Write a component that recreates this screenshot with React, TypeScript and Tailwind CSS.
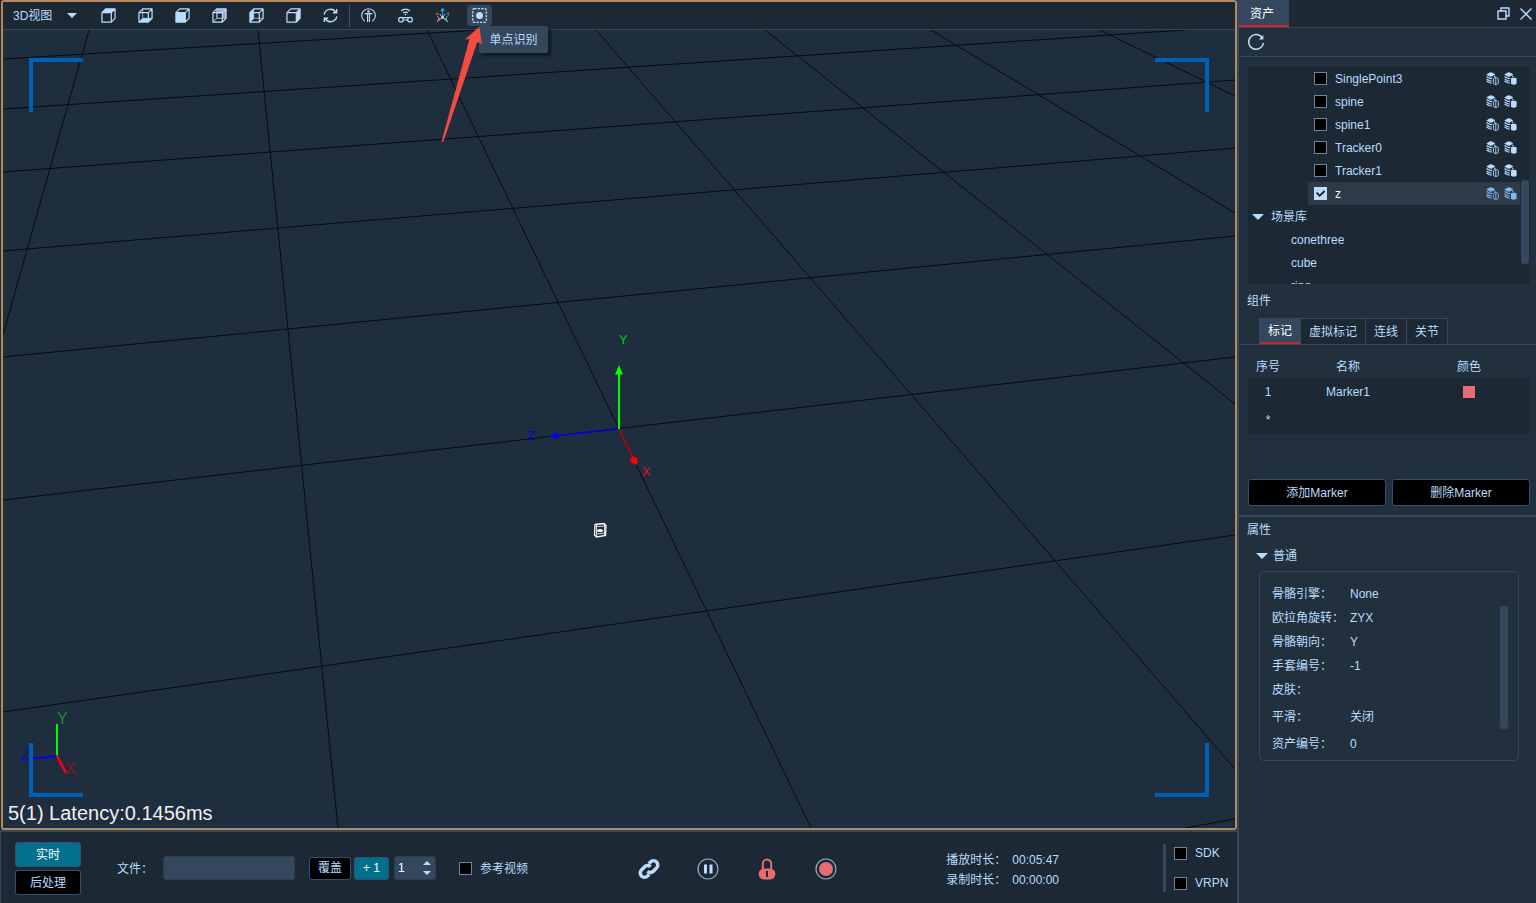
import React, { useState } from "react";

const axes = [
  [3, 59, 480, 30],
  [3, 109, 1185, 30],
  [3, 172, 1235, 80],
  [3, 251, 1235, 148],
  [3, 357, 1235, 236],
  [3, 500, 1235, 357],
  [3, 712, 1235, 535],
  [1185, 828, 1235, 819],
  [89, 30, 3, 335],
  [258, 30, 338, 828],
  [427, 30, 811, 828],
  [596, 30, 1235, 769],
  [765, 30, 1235, 404],
  [931, 30, 1235, 213],
  [1100, 30, 1235, 96],
];

const views = ["top", "bottom", "front", "back", "left", "right"];

const facePaths: Record<string, string> = {
  top: "M1 5 5 1h10l-4 4z",
  bottom: "M1 15l4-4h10l-4 4z",
  front: "M1 5h10v10H1z",
  back: "M5 1h10v10H5z",
  left: "M1 5l4-4v10l-4 4z",
  right: "M11 5l4-4v10l-4 4z",
};

const assets = ["SinglePoint3", "spine", "spine1", "Tracker0", "Tracker1", "z"];
const scenes = ["conethree", "cube", "ring"];
const tabs = ["标记", "虚拟标记", "连线", "关节"];

const props = [
  { label: "骨骼引擎：", value: "None", h: "h-6" },
  { label: "欧拉角旋转：", value: "ZYX", h: "h-6" },
  { label: "骨骼朝向：", value: "Y", h: "h-6" },
  { label: "手套编号：", value: "-1", h: "h-6" },
  { label: "皮肤：", value: "", h: "h-6" },
  { label: "平滑：", value: "关闭", h: "h-[30px]" },
  { label: "资产编号：", value: "0", h: "h-6" },
];

function CubeIcon({ face }: { face: string }) {
  const hidden = face === "bottom" || face === "back" || face === "left";
  return (
    <svg width="15" height="15" viewBox="0 0 16 16" fill="none" stroke="#b9dcff" strokeWidth="1.3" strokeLinejoin="round">
      {hidden && <path d="M5 1v10h10M5 11l-4 4" strokeWidth="1.1" opacity="0.7" />}
      <path d={facePaths[face]} fill="#b9dcff" stroke="none" opacity={face === "back" ? 0.75 : 1} />
      <path d="M1 5 5 1h10v10l-4 4H1zM1 5h10v10M11 5l4-4" />
      {face === "back" && <path d="M6 6h4.400v4.400H6z" fill="#1c2834" stroke="none" />}
    </svg>
  );
}

function Caret({ className = "" }: { className?: string }) {
  return (
    <svg width="12" height="6" viewBox="0 0 12 6" className={className}>
      <path d="M0 0h12L6 6z" fill="#b9dcff" />
    </svg>
  );
}

function SyncIcon() {
  return (
    <svg width="15" height="15" viewBox="0 0 16 16" fill="none" stroke="#b9dcff" strokeWidth="1.500">
      <path d="M1.200 7A6.900 6.900 0 0 1 13.800 4.600M14.800 9A6.900 6.900 0 0 1 2.200 11.400" />
      <path d="M14.600 1v4h-4M1.400 15v-4h4" />
    </svg>
  );
}

function BodyIcon() {
  return (
    <svg width="15" height="15" viewBox="0 0 16 16" fill="none" stroke="#b9dcff" strokeWidth="1.2">
      <path d="M4 14.200A7.300 7.300 0 1 1 12 14.200" />
      <circle cx="8" cy="3.600" r="1.300" fill="#b9dcff" stroke="none" />
      <path d="M4 6h8" strokeWidth="1.400" />
      <path d="M7 6v9M9 6v9" />
    </svg>
  );
}

function TrackerIcon() {
  return (
    <svg width="15" height="15" viewBox="0 0 16 16" fill="none" stroke="#b9dcff" strokeWidth="1.3">
      <path d="M3.400 3.200a6.400 6.400 0 0 1 9.200 0M5.400 5.400a3.600 3.600 0 0 1 5.200 0" />
      <circle cx="8" cy="7" r="0.9" fill="#b9dcff" stroke="none" />
      <circle cx="3.200" cy="12.400" r="2.500" />
      <circle cx="12.800" cy="12.400" r="2.500" />
      <path d="M4.400 10.200h7.200M5.600 12.800h4.800" />
    </svg>
  );
}

function AxesIcon() {
  return (
    <svg width="15" height="15" viewBox="0 0 16 16" fill="none">
      <path d="M8 10V2M6 3.400 8 1.200l2 2.200M6.400 1h3.400" stroke="#3f8fe0" strokeWidth="1.2" />
      <path d="M8 10l-6 4.600" stroke="#e66c70" strokeWidth="1.3" />
      <path d="M8 10l6 4.600" stroke="#5fc9a8" strokeWidth="1.3" />
      <path d="M1 5l2.400 2.600M3.400 5 1 7.600" stroke="#d2565c" />
      <path d="M12.600 4.600l1.400 1.600 1.400-1.600M14 6.200v2" stroke="#4fb896" />
      <path d="M2.600 9c1.800 1 1.800 2.400 1.400 4M13.400 9c-1.800 1-1.800 2.400-1.400 4M5 6.400 8 10l3-3.600" stroke="#b9dcff" />
      <circle cx="8" cy="10" r="1.400" fill="#b9dcff" />
    </svg>
  );
}

function PointIcon() {
  return (
    <svg width="15" height="15" viewBox="0 0 15 15" fill="none">
      <rect x="0.700" y="0.700" width="13.600" height="13.600" rx="1.500" stroke="#b9dcff" strokeWidth="1.3" strokeDasharray="2.300 1.200" />
      <circle cx="7.500" cy="7.500" r="3.500" fill="#b9dcff" />
    </svg>
  );
}

function StackIcon({ filled, color }: { filled: boolean; color: string }) {
  return (
    <svg width="13" height="13" viewBox="0 0 13 13" fill="none" stroke={color}>
      <path d="M.6 2.500C2 2.200 3.200.6 4.800.6S7.600 1.900 9 2.500C7.600 3.200 6.400 4.400 4.800 4.400S2 3.200.6 2.500z" fill={color} strokeWidth="0.5" />
      <path d="M.5 4.600c1.500.4 2.600 2 4.300 2l1.400-.4M.5 7c1.500.4 2.600 2 4.300 2h1M.5 9.200c1.500.4 2.600 1.800 4.300 1.800h1M8.800 3.800v1.400" strokeWidth="1.200" />
      {filled ? (
        <path d="M7 6.600c0-1 5.600-1 5.600 0v5c0 1.400-5.600 1.400-5.600 0z" fill={color} stroke="none" />
      ) : (
        <path d="M9.800 5.600c-1.600 0-2.400.6-2.400 1.600v3.600c0 1 .8 1.600 2.400 1.600s2.500-.6 2.500-1.600V7.200c0-1-.9-1.600-2.500-1.600zM9.800 5.600v7" strokeWidth="0.9" />
      )}
    </svg>
  );
}

function Checkbox({ id, checked, onChange }: { id: string; checked?: boolean; onChange?: () => void }) {
  return (
    <span className="relative flex size-[13px] shrink-0">
      <input
        id={id}
        type="checkbox"
        checked={checked}
        onChange={onChange}
        className="peer size-[13px] appearance-none border border-[#6f859e] bg-black checked:border-[#b9dcff] checked:bg-[#b9dcff]"
      />
      <svg width="13" height="13" viewBox="0 0 13 13" className="pointer-events-none absolute inset-0 hidden peer-checked:block">
        <path d="M2.600 5.600l3 3.200L10.600 4" fill="none" stroke="#10181f" strokeWidth="1.8" />
      </svg>
    </span>
  );
}

function ToolButton({ label, active, children }: { label: string; active?: boolean; children: React.ReactNode }) {
  return (
    <button aria-label={label} className={`flex h-[21px] w-[25px] items-center justify-center rounded-sm ${active ? "bg-[#35475c]" : ""}`}>
      {children}
    </button>
  );
}

function Toolbar() {
  return (
    <div className="flex h-7 shrink-0 items-center border-b border-[#35475c] bg-[#1c2834] pl-2.5">
      <div className="relative mr-[17px] flex w-[66px] items-center">
        <select aria-label="3D视图" className="w-full appearance-none bg-transparent outline-none">
          <option>3D视图</option>
        </select>
        <Caret className="pointer-events-none absolute right-0.5 h-[5px] w-2.5" />
      </div>
      <div className="flex items-center gap-3">
        {views.map((v) => (
          <ToolButton key={v} label={v}>
            <CubeIcon face={v} />
          </ToolButton>
        ))}
        <ToolButton label="sync">
          <SyncIcon />
        </ToolButton>
      </div>
      <div className="mx-[6px] h-[22px] w-px bg-[#35557a]" />
      <div className="flex items-center gap-3">
        <ToolButton label="body">
          <BodyIcon />
        </ToolButton>
        <ToolButton label="tracker">
          <TrackerIcon />
        </ToolButton>
        <ToolButton label="axes">
          <AxesIcon />
        </ToolButton>
        <div className="relative">
          <ToolButton label="单点识别" active>
            <PointIcon />
          </ToolButton>
          <div role="tooltip" className="absolute top-[21px] left-3 z-10 flex h-[27px] w-[69px] items-center justify-center rounded-xs bg-[#35475c] whitespace-nowrap shadow-[3px_3px_3px_#111a22]">
            单点识别
          </div>
          <svg width="44" height="120" viewBox="440 25 44 120" className="absolute top-5 -left-[27px] z-20 max-w-none">
            <path d="M479.300 26.700 465 39.600l4.500-.6L441.600 141.600h1.800L477.300 42l4.600 1.900z" fill="#f24b3f" />
          </svg>
        </div>
      </div>
    </div>
  );
}

function Viewport() {
  return (
    <div className="relative flex-1 overflow-hidden bg-[#1f2e3e]">
      <svg viewBox="3 30 1232 798" preserveAspectRatio="xMidYMid slice" className="absolute inset-0 h-full w-full">
        {axes.map(([x1, y1, x2, y2], i) => (
          <line key={i} x1={x1} y1={y1} x2={x2} y2={y2} stroke="#070b0f" strokeWidth="1" />
        ))}
        <path d="M619 429 554 436" stroke="#0000f0" strokeWidth="1.5" />
        <path d="M548 436.600l10-4v6z" fill="#0000ff" />
        <path d="M619 429l14 29" stroke="#d00000" strokeWidth="1.5" />
        <path d="M630 459l3-3 4 2 .6 4-.8 3-5-2z" fill="#ff0000" />
        <path d="M619 429v-56" stroke="#00ff00" strokeWidth="2" />
        <path d="M619 365l4 9.500h-8z" fill="#00ff00" />
        <g fontSize="13" fontFamily="Liberation Sans, sans-serif">
          <text x="619" y="344" fill="#00c814">Y</text>
          <text x="527" y="440" fill="#0000e0">Z</text>
          <text x="642" y="476" fill="#e01414">X</text>
        </g>
        <g fill="none" stroke="#fff" strokeWidth="1.3">
          <path d="M595 524.500l9-1 2 2-.5 10-9 1.500-2-2z" />
          <path d="M596 526.500l9.500-.5M596 534l9-1M596.500 525v11M604.500 524v11" strokeWidth="0.8" />
          <ellipse cx="600" cy="530.500" rx="3" ry="1.600" fill="#fff" stroke="none" />
        </g>
      </svg>
      <svg width="60" height="72" viewBox="20 708 60 72" className="absolute bottom-12 left-[17px]">
        <path d="M57 756v-32" stroke="#00ff00" strokeWidth="2" />
        <path d="M57 756l-35 4" stroke="#0000ff" strokeWidth="2" />
        <path d="M57 756l9 17" stroke="#ff0000" strokeWidth="2.5" />
        <g fontSize="16" fontFamily="Liberation Sans, sans-serif">
          <text x="57" y="724" fill="#148c28">Y</text>
          <text x="21" y="760" fill="#14148c">Z</text>
          <text x="65" y="774" fill="#8c1420">X</text>
        </g>
      </svg>
      <div className="absolute top-7 left-[26px] size-[54px] border-t-4 border-l-4 border-[#0060b4]" />
      <div className="absolute top-7 right-[26px] size-[54px] border-t-4 border-r-4 border-[#0060b4]" />
      <div className="absolute bottom-[31px] left-[26px] size-[54px] border-b-4 border-l-4 border-[#0060b4]" />
      <div className="absolute right-[26px] bottom-[31px] size-[54px] border-r-4 border-b-4 border-[#0060b4]" />
      <div className="absolute bottom-px left-[5px] text-xl text-[#f0f0f0]">5(1) Latency:0.1456ms</div>
    </div>
  );
}

function BottomBar() {
  const [video, setVideo] = useState(false);
  return (
    <div className="flex h-[73px] shrink-0 items-center border-t-2 border-l border-[#35475c] bg-[#1c2834] pt-px pl-3.5">
      <div className="flex flex-col gap-[3px]">
        <button className="h-[25px] w-[66px] rounded-[3px] border border-[#2f5273] bg-[#00708c] pt-0.5 text-white">实时</button>
        <button className="h-[25px] w-[66px] rounded-[3px] border border-[#2f5273] bg-black pt-0.5">后处理</button>
      </div>
      <label htmlFor="file" className="ml-9 pt-0.5">文件：</label>
      <input id="file" className="ml-2.5 h-6 w-[132px] rounded-[3px] border border-[#2c3d4f] bg-[#35475c] px-1 outline-none" />
      <button className="ml-3.5 h-[23px] w-[42px] rounded-[3px] border border-[#2f5273] bg-black">覆盖</button>
      <button className="ml-[3px] h-[23px] w-[35px] rounded-[3px] border border-[#2f5273] bg-[#00708c] text-white">+ 1</button>
      <div className="relative ml-[5px] flex h-6 w-[42px] items-center">
        <input aria-label="take" defaultValue="1" className="h-full w-full rounded-[3px] border border-[#2c3d4f] bg-[#35475c] px-[3px] text-white outline-none" />
        <div className="absolute right-[5px] flex flex-col gap-1.5">
          <Caret className="h-1 w-2 rotate-180" />
          <Caret className="h-1 w-2" />
        </div>
      </div>
      <div className="ml-[23px] flex items-center gap-2">
        <Checkbox id="video" checked={video} onChange={() => setVideo(!video)} />
        <label htmlFor="video" className="pt-0.5">参考视频</label>
      </div>
      <div className="ml-[110px] flex items-center gap-[37px] pt-0.5">
        <button aria-label="link">
          <svg width="22" height="22" viewBox="0 0 24 24" fill="none" stroke="#b9dcff" strokeWidth="3.8">
            <path d="M10.300 14.400a4.600 4.600 0 0 0 6.700-.2l3.200-3.200a4.700 4.700 0 0 0-6.600-6.700l-1.900 1.900" />
            <path d="M13.700 9.600a4.600 4.600 0 0 0-6.700.2L3.800 13a4.700 4.700 0 0 0 6.600 6.700l1.900-1.900" />
          </svg>
        </button>
        <button aria-label="pause">
          <svg width="22" height="22" viewBox="0 0 22 22">
            <circle cx="11" cy="11" r="10" fill="none" stroke="#8fb0d2" strokeWidth="1.2" />
            <path d="M7 6.500h3v9H7zM12.500 6.500h3v9h-3z" fill="#b9dcff" />
          </svg>
        </button>
        <button aria-label="lock">
          <svg width="22" height="22" viewBox="0 0 22 22">
            <path d="M6.800 12V5.800a4.200 4.200 0 0 1 8.400 0V12" fill="none" stroke="#e66c70" strokeWidth="2" />
            <rect x="2.600" y="10.500" width="16.800" height="11" rx="5.500" fill="#e66c70" />
            <path d="M11 13v6" stroke="#1c2834" strokeWidth="2" />
          </svg>
        </button>
        <button aria-label="record">
          <svg width="22" height="22" viewBox="0 0 22 22">
            <circle cx="11" cy="11" r="10" fill="none" stroke="#8fb0d2" strokeWidth="1.2" />
            <circle cx="11" cy="11" r="7" fill="#e66c70" />
          </svg>
        </button>
      </div>
      <div className="ml-auto grid grid-cols-[66px_auto] pt-1 leading-5">
        <span>播放时长：</span>
        <span>00:05:47</span>
        <span>录制时长：</span>
        <span>00:00:00</span>
      </div>
      <div className="ml-[104px] h-12 w-[3px] bg-[#35475c]" />
      <div className="ml-2 flex w-[63px] flex-col gap-3 leading-[18px]">
        <div className="flex items-center gap-2">
          <Checkbox id="sdk" />
          <label htmlFor="sdk">SDK</label>
        </div>
        <div className="flex items-center gap-2">
          <Checkbox id="vrpn" />
          <label htmlFor="vrpn">VRPN</label>
        </div>
      </div>
    </div>
  );
}

function AssetTree() {
  const [selected, setSelected] = useState("z");
  return (
    <div className="relative mr-1.5 ml-[9px] h-[217px] overflow-hidden bg-[#1c2834]">
      <ul className="mr-2.5">
        {assets.map((name) => {
          const active = name === selected;
          return (
            <li key={name} className={`ml-[60px] flex h-[23px] items-center pr-[3px] pl-1.5 ${active ? "bg-[#2e3a48] text-white" : ""}`}>
              <Checkbox id={name} checked={active} onChange={() => setSelected(name)} />
              <label htmlFor={name} className="ml-2">{name}</label>
              <span className="ml-auto flex gap-[5px]">
                <StackIcon filled={false} color={active ? "#7db8ee" : "#b9dcff"} />
                <StackIcon filled color={active ? "#7db8ee" : "#b9dcff"} />
              </span>
            </li>
          );
        })}
        <li className="flex h-[23px] items-center gap-[7px] pl-1">
          <Caret />
          场景库
        </li>
        {scenes.map((name) => (
          <li key={name} className="flex h-[23px] items-center pl-[43px]">{name}</li>
        ))}
      </ul>
      <div className="absolute top-[113px] right-px h-[84px] w-2 rounded-[3px] bg-[#35475c]" />
    </div>
  );
}

function SidePanel() {
  const [tab, setTab] = useState("标记");
  return (
    <aside className="flex w-[299px] shrink-0 flex-col border-l-2 border-[#35475c] bg-[#222f3d]">
      <div className="flex h-7 shrink-0 items-center border-b border-[#35475c] bg-[#1c2834]">
        <button className="h-[27px] w-[50px] border-b-2 border-[#c8252c] bg-[#35475c] pt-0.5 pr-1 text-white">资产</button>
        <button aria-label="float" className="ml-auto">
          <svg width="13" height="13" viewBox="0 0 13 13" fill="none" stroke="#b9dcff" strokeWidth="1.4">
            <path d="M1 4h8v8H1zM4 4V1h8v8H9" />
          </svg>
        </button>
        <button aria-label="close" className="mr-1 ml-2.5">
          <svg width="12" height="12" viewBox="0 0 12 12" fill="none" stroke="#b9dcff" strokeWidth="1.4">
            <path d="M.5.5l11 11M11.500.5l-11 11" />
          </svg>
        </button>
      </div>
      <div className="mb-2.5 flex h-[29px] shrink-0 items-center border-b border-[#35475c] pl-2">
        <button aria-label="refresh">
          <svg width="18" height="18" viewBox="0 0 18 18" fill="none" stroke="#b9dcff" strokeWidth="1.5">
            <path d="M15.400 5A7.400 7.400 0 1 0 16.400 10" />
            <path d="M16.400 2v4.400h-4.600z" fill="#b9dcff" stroke="none" />
          </svg>
        </button>
      </div>
      <AssetTree />
      <h2 className="mt-2 ml-2 leading-[18px]">组件</h2>
      <div role="tablist" className="mt-2 flex border-b border-[#35475c] pl-5">
        {tabs.map((t) => (
          <button
            key={t}
            role="tab"
            aria-selected={t === tab}
            onClick={() => setTab(t)}
            className={`h-[26px] border-t border-r border-[#35475c] px-2 first:border-l ${t === tab ? "border-b-2 border-b-[#c8252c] bg-[#35475c] text-white" : "bg-[#1c2834]"}`}
          >
            {t}
          </button>
        ))}
      </div>
      <table className="mt-2.5 mr-1.5 ml-[9px] table-fixed text-center">
        <thead>
          <tr className="h-[23px]">
            <th className="w-10 font-normal">序号</th>
            <th className="w-[120px] font-normal">名称</th>
            <th className="font-normal">颜色</th>
          </tr>
        </thead>
        <tbody className="bg-[#1c2834]">
          <tr className="h-7">
            <td>1</td>
            <td>Marker1</td>
            <td><span className="mx-auto block size-3 bg-[#e66c70]" /></td>
          </tr>
          <tr className="h-7">
            <td>*</td>
            <td />
            <td />
          </tr>
        </tbody>
      </table>
      <div className="mt-[45px] mr-1.5 ml-[9px] flex gap-1.5">
        <button className="h-[27px] flex-1 rounded-[3px] border border-[#2f5273] bg-black">添加Marker</button>
        <button className="h-[27px] flex-1 rounded-[3px] border border-[#2f5273] bg-black">删除Marker</button>
      </div>
      <div className="mt-[9px] h-0.5 bg-[#35475c]" />
      <h2 className="mt-1 ml-2 leading-[18px]">属性</h2>
      <h3 className="mt-2 ml-[17px] flex items-center gap-[5px] leading-[18px]">
        <Caret />
        普通
      </h3>
      <div className="relative mt-1.5 mr-[17px] ml-5 rounded-[5px] border border-[#35475c] pt-2.5 pb-1 pl-3">
        <dl>
          {props.map((p) => (
            <div key={p.label} className={`flex items-center ${p.h}`}>
              <dt className="w-[78px] whitespace-nowrap">{p.label}</dt>
              <dd>{p.value}</dd>
            </div>
          ))}
        </dl>
        <div className="absolute top-[34px] right-2.5 h-[123px] w-2 rounded-[3px] bg-[#35475c]" />
      </div>
    </aside>
  );
}

export default function App() {
  return (
    <div className="flex h-screen overflow-hidden bg-[#1c2834] font-['Liberation_Sans','Noto_Sans_CJK_SC',sans-serif] text-xs text-[#b9dcff]">
      <main className="flex min-w-0 flex-1 flex-col">
        <div className="ml-px flex min-h-0 flex-1 flex-col rounded-[3px] border-2 border-[#b8895f]">
          <Toolbar />
          <Viewport />
        </div>
        <BottomBar />
      </main>
      <SidePanel />
    </div>
  );
}
